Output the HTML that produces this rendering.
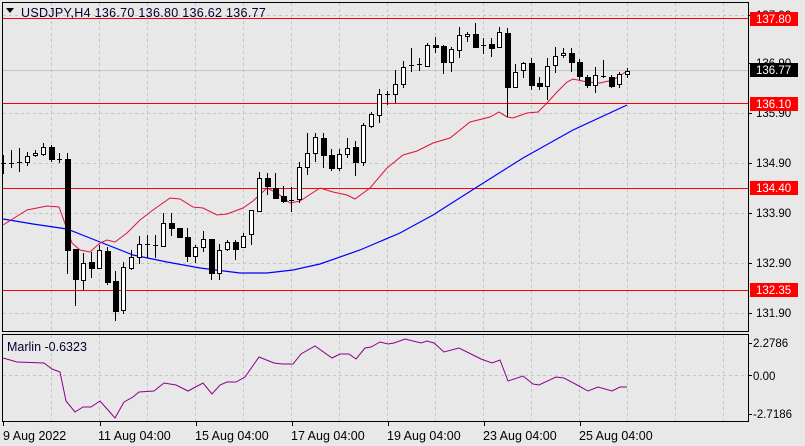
<!DOCTYPE html>
<html><head><meta charset="utf-8"><style>
html,body{margin:0;padding:0;background:#e8e8e8;width:805px;height:446px;overflow:hidden}
svg{display:block}
text{font-family:"Liberation Sans",sans-serif;font-size:12px}
.ax{font-size:11.5px}
</style></head><body>
<svg width="805" height="446" viewBox="0 0 805 446" xmlns="http://www.w3.org/2000/svg">
<rect width="805" height="446" fill="#e8e8e8"/>
<g stroke="#c4c4c4" stroke-dasharray="3,3" stroke-width="1" shape-rendering="crispEdges">
<path d="M51.5 3V331M99.5 3V331M147.5 3V331M195.5 3V331M243.5 3V331M291.5 3V331M339.5 3V331M387.5 3V331M435.5 3V331M483.5 3V331M531.5 3V331M579.5 3V331M627.5 3V331M675.5 3V331M723.5 3V331"/>
<path d="M51.5 335V421M99.5 335V421M147.5 335V421M195.5 335V421M243.5 335V421M291.5 335V421M339.5 335V421M387.5 335V421M435.5 335V421M483.5 335V421M531.5 335V421M579.5 335V421M627.5 335V421M675.5 335V421M723.5 335V421"/>
<path d="M3 15.5H748M3 113.5H748M3 163.5H748M3 213.5H748M3 263.5H748M3 313.5H748M3 375.5H748"/>
</g>
<path d="M3 70.5H748" stroke="#c4c4c4" shape-rendering="crispEdges"/>
<g stroke="#ff0000" stroke-width="1" shape-rendering="crispEdges">
<path d="M3 18.5H748M3 103.5H748M3 188.5H748M3 290.5H748"/>
</g>
<polyline fill="none" stroke="#0000ff" stroke-width="1.2" points="3,219 33,224 67,229 100,242 133,255 167,262 200,268 240,273 267,273 293,270 320,264 360,250 400,233 433,215 477,187 523,158 573,130 627,105"/>
<polyline fill="none" stroke="#e0103a" stroke-width="1" points="3,225 27,210 47,206 59,207 72,243 80,250 90,252 100,243 107,240 115,242 127,233 140,220 153,210 170,198 180,199 193,207 203,208 217,215 227,214 243,208 253,201 267,188 277,193 290,203 300,201 320,188 333,192 347,195 355,199 370,188 387,168 403,155 417,151 433,143 450,138 470,122 490,117 499,112 507,117 513,118 527,113 538,112 547,103 557,92 567,82 573,79 587,82 600,83 613,80 627,71"/>
<g stroke="#000" stroke-width="1" shape-rendering="crispEdges">
<path d="M3.5 155V174M1 163.5H6M11.5 150V168M9 163.5H14M19.5 148V172M17 162.5H22M59.5 153V163M57 159.5H62M147.5 235V258M145 244.5H150M155.5 235V258M153 245.5H158M291.5 187V212M289 200.5H294M387.5 91V105M385 94.5H390M411.5 48V72M409 65.5H414M419.5 58V71M417 64.5H422M483.5 38V54M481 45.5H486M603.5 60V78M601 76.5H606"/>
<path d="M27.5 152V166M35.5 150V157M43.5 143V156M51.5 145V162M67.5 153V274M75.5 249V306M83.5 253V290M91.5 252V278M99.5 245V268M107.5 247V285M115.5 271V321M123.5 262V314M131.5 250V270M139.5 236V264M163.5 213V247M171.5 213V236M179.5 228V238M187.5 228V262M195.5 245V263M203.5 231V252M211.5 239V280M219.5 244V280M227.5 240V251M235.5 240V260M243.5 233V248M251.5 210V245M259.5 172V211M267.5 173V195M275.5 173V198M283.5 186V203M299.5 162V203M307.5 133V175M315.5 133V162M323.5 133V168M331.5 149V171M339.5 149V171M347.5 138V158M355.5 141V176M363.5 123V166M371.5 112V128M379.5 89V123M395.5 70V103M403.5 61V88M427.5 43V67M435.5 37V53M443.5 45V74M451.5 47V72M459.5 27V58M467.5 32V42M475.5 23V48M491.5 38V57M499.5 27V48M507.5 28V117M515.5 64V87M523.5 62V78M531.5 58V90M539.5 77V90M547.5 58V100M555.5 47V73M563.5 48V58M571.5 48V72M579.5 59V80M587.5 75V88M595.5 67V93M611.5 75V88M619.5 72V88M627.5 68V78"/>
</g>
<g stroke="#000" stroke-width="1" fill="#fff" shape-rendering="crispEdges">
<rect x="25.5" y="156.5" width="4" height="6"/><rect x="33.5" y="153.5" width="4" height="2"/><rect x="41.5" y="147.5" width="4" height="7"/>
<rect x="81.5" y="263.5" width="4" height="17"/><rect x="97.5" y="250.5" width="4" height="18"/><rect x="121.5" y="267.5" width="4" height="43"/>
<rect x="129.5" y="257.5" width="4" height="11"/><rect x="137.5" y="244.5" width="4" height="13"/><rect x="161.5" y="223.5" width="4" height="23"/>
<rect x="193.5" y="247.5" width="4" height="9"/><rect x="201.5" y="239.5" width="4" height="8"/><rect x="217.5" y="250.5" width="4" height="23"/>
<rect x="225.5" y="242.5" width="4" height="7"/><rect x="241.5" y="236.5" width="4" height="11"/><rect x="249.5" y="210.5" width="4" height="24"/>
<rect x="257.5" y="178.5" width="4" height="33"/><rect x="297.5" y="167.5" width="4" height="32"/><rect x="305.5" y="153.5" width="4" height="14"/>
<rect x="313.5" y="137.5" width="4" height="16"/><rect x="337.5" y="154.5" width="4" height="14"/><rect x="345.5" y="148.5" width="4" height="6"/>
<rect x="361.5" y="125.5" width="4" height="37"/><rect x="369.5" y="114.5" width="4" height="12"/><rect x="377.5" y="94.5" width="4" height="21"/>
<rect x="393.5" y="84.5" width="4" height="10"/><rect x="401.5" y="67.5" width="4" height="17"/><rect x="425.5" y="45.5" width="4" height="21"/>
<rect x="449.5" y="49.5" width="4" height="13"/><rect x="457.5" y="35.5" width="4" height="15"/><rect x="465.5" y="34.5" width="4" height="2"/>
<rect x="497.5" y="32.5" width="4" height="15"/><rect x="513.5" y="72.5" width="4" height="15"/><rect x="521.5" y="63.5" width="4" height="7"/>
<rect x="545.5" y="66.5" width="4" height="20"/><rect x="553.5" y="56.5" width="4" height="9"/><rect x="561.5" y="53.5" width="4" height="2"/>
<rect x="593.5" y="75.5" width="4" height="10"/><rect x="617.5" y="74.5" width="4" height="10"/><rect x="625.5" y="71.5" width="4" height="3"/>
</g>
<g fill="#000" shape-rendering="crispEdges">
<rect x="49" y="147" width="6" height="13"/><rect x="65" y="159" width="6" height="92"/><rect x="73" y="249" width="6" height="31"/>
<rect x="89" y="262" width="6" height="7"/><rect x="105" y="251" width="6" height="32"/><rect x="113" y="281" width="6" height="31"/>
<rect x="169" y="223" width="6" height="6"/><rect x="177" y="228" width="6" height="10"/><rect x="185" y="237" width="6" height="20"/>
<rect x="209" y="239" width="6" height="35"/><rect x="233" y="242" width="6" height="8"/><rect x="265" y="178" width="6" height="9"/>
<rect x="273" y="188" width="6" height="11"/><rect x="281" y="196" width="6" height="6"/><rect x="321" y="138" width="6" height="18"/>
<rect x="329" y="155" width="6" height="14"/><rect x="353" y="147" width="6" height="16"/><rect x="433" y="45" width="6" height="3"/>
<rect x="441" y="46" width="6" height="17"/><rect x="473" y="34" width="6" height="14"/><rect x="489" y="44" width="6" height="5"/>
<rect x="505" y="33" width="6" height="55"/><rect x="529" y="63" width="6" height="23"/><rect x="537" y="83" width="6" height="4"/>
<rect x="569" y="53" width="6" height="10"/><rect x="577" y="62" width="6" height="15"/><rect x="585" y="77" width="6" height="9"/>
<rect x="609" y="77" width="6" height="10"/>
</g>
<polyline fill="none" stroke="#8b008b" stroke-width="1" points="3,358 17,362 44,363 52,369 60,372 66,401 75,412 83,407 91,407 100,401 108,410 115,418 124,402 133,397 139,392 154,391 164,383 176,385 188,391 203,383 212,394 220,385 227,382 236,382 245,377 259,357 274,363 282,364 293,364 301,354 315,346 332,358 340,354 349,354 356,359 365,348 371,347 380,342 388,344 394,343 405,339 421,343 427,341 434,343 444,352 459,348 473,355 481,359 492,363 500,360 508,381 523,376 533,384 539,385 556,377 564,378 579,386 588,391 598,387 612,391 620,387 627,387"/>
<g fill="none" stroke="#000" stroke-width="1" shape-rendering="crispEdges">
<rect x="2.5" y="2.5" width="746" height="329"/>
<rect x="2.5" y="334.5" width="746" height="87"/>
<path d="M748 15.5H752M748 63.5H752M748 113.5H752M748 163.5H752M748 213.5H752M748 263.5H752M748 313.5H752M748 343.5H752M748 375.5H752M748 414.5H752M3.5 422V426M100.5 422V426M196.5 422V426M292.5 422V426M388.5 422V426M484.5 422V426M580.5 422V426"/>
</g>
<path d="M6 8H14L10 13Z" fill="#000"/>
<text x="21" y="17" fill="#000030" style="font-size:12.5px;letter-spacing:0.3px">USDJPY,H4  136.70 136.80 136.62 136.77</text>
<text x="7" y="351" fill="#000030" style="font-size:12.5px">Marlin -0.6323</text>
<g fill="#000" class="ax">
<text class="ax" x="756" y="19">137.90</text><text class="ax" x="756" y="67">136.90</text><text class="ax" x="756" y="117">135.90</text>
<text class="ax" x="756" y="167">134.90</text><text class="ax" x="756" y="217">133.90</text><text class="ax" x="756" y="267">132.90</text><text class="ax" x="756" y="317">131.90</text>
<text class="ax" x="753" y="347">2.2786</text><text class="ax" x="753" y="380">0.00</text><text class="ax" x="753" y="418">-2.7186</text>
</g>
<rect x="750" y="12" width="48" height="14" fill="#ff0000"/><text class="ax" x="756" y="23" fill="#fff">137.80</text>
<rect x="750" y="63" width="48" height="14" fill="#000"/><text class="ax" x="756" y="74" fill="#fff">136.77</text>
<rect x="750" y="97" width="48" height="14" fill="#ff0000"/><text class="ax" x="756" y="108" fill="#fff">136.10</text>
<rect x="750" y="181" width="48" height="14" fill="#ff0000"/><text class="ax" x="756" y="192" fill="#fff">134.40</text>
<rect x="750" y="283" width="48" height="14" fill="#ff0000"/><text class="ax" x="756" y="294" fill="#fff">132.35</text>
<g fill="#000" style="font-size:12.5px">
<text x="3" y="440" style="font-size:12.5px">9 Aug 2022</text><text x="98" y="440" style="font-size:12.5px">11 Aug 04:00</text><text x="195" y="440" style="font-size:12.5px">15 Aug 04:00</text>
<text x="291" y="440" style="font-size:12.5px">17 Aug 04:00</text><text x="387" y="440" style="font-size:12.5px">19 Aug 04:00</text><text x="483" y="440" style="font-size:12.5px">23 Aug 04:00</text><text x="579" y="440" style="font-size:12.5px">25 Aug 04:00</text>
</g>
</svg>
</body></html>
